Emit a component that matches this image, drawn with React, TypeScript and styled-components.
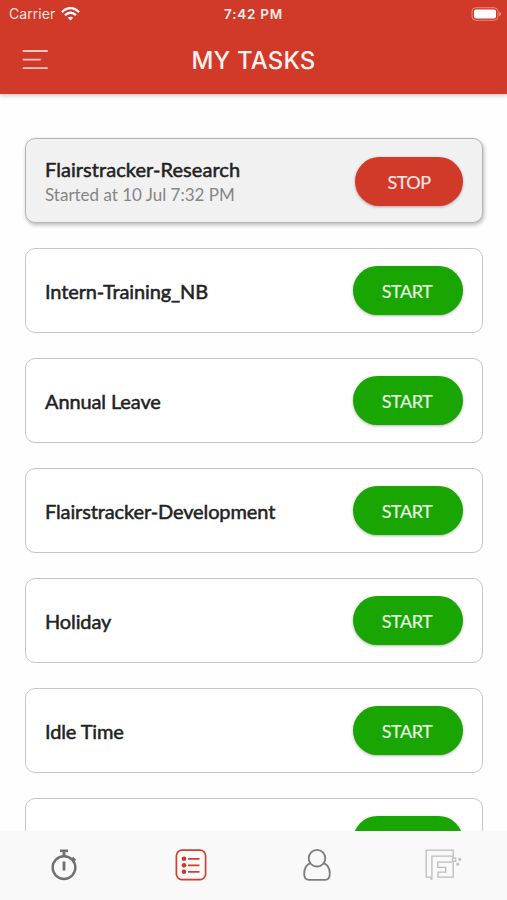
import React from "react";
import styled, { createGlobalStyle } from "styled-components";

const GlobalStyle = createGlobalStyle`
  * { box-sizing: border-box; }
  body { margin: 0; background: #fff; }
`;

const Screen = styled.div`
  display: flex;
  flex-direction: column;
  width: 507px;
  height: 900px;
  overflow: hidden;
  background: #fefefe;
  font-family: Lato, sans-serif;
`;

const Header = styled.header`
  flex: none;
  height: 94px;
  background: #d13929;
  color: #fff;
  box-shadow: 0 1px 5px rgba(0, 0, 0, 0.28);
  font-family: Inter, sans-serif;
  z-index: 1;
`;

const StatusBar = styled.div`
  display: grid;
  grid-template-columns: 1fr auto 1fr;
  align-items: center;
  height: 27px;
  padding: 0 7px 0 9px;
`;

const Carrier = styled.div`
  display: flex;
  align-items: center;
  gap: 6px;
  font-size: 14px;
  letter-spacing: 0.05px;
  color: #fbe3df;
`;

const Clock = styled.div`
  margin: 0 2px 0 0;
  font-size: 13.5px;
  font-weight: 600;
  letter-spacing: 0.75px;
  color: #fdeeeb;
`;

const Battery = styled.div`
  display: flex;
  justify-content: flex-end;
  margin-right: -2px;
`;

const TitleBar = styled.div`
  display: grid;
  grid-template-columns: 60px 1fr 60px;
  align-items: center;
  height: 66px;
`;

const MenuButton = styled.button`
  display: flex;
  padding: 0 0 0 22px;
  border: 0;
  background: none;
`;

const Title = styled.h1`
  margin: 0;
  padding-top: 1px;
  text-align: center;
  font-size: 24px;
  line-height: 30px;
  font-weight: 500;
  letter-spacing: 0.15px;
  color: #fff1ee;
`;

const TaskList = styled.main`
  flex: 1;
  min-height: 0;
  overflow: hidden;
  display: flex;
  flex-direction: column;
  gap: 25px;
  padding: 44px 24px 0 25px;
`;

const Card = styled.section<{ $active?: boolean }>`
  flex: none;
  display: flex;
  align-items: center;
  justify-content: space-between;
  height: 85px;
  padding: 0 19px;
  border: 1px solid ${(p) => (p.$active ? "#b4b4b4" : "#c6c6c6")};
  border-radius: 10px;
  background: ${(p) => (p.$active ? "#f1f1f1" : "#fff")};
  box-shadow: ${(p) => (p.$active ? "1px 2px 4px rgba(0, 0, 0, 0.28)" : "none")};
`;

const TaskText = styled.div<{ $active?: boolean }>`
  padding-top: ${(p) => (p.$active ? 3 : 0)}px;
`;

const TaskName = styled.div<{ $active?: boolean }>`
  font-size: 20px;
  line-height: 26px;
  letter-spacing: ${(p) => (p.$active ? "0.06px" : "-0.12px")};
  color: #222;
  -webkit-text-stroke: 0.5px #222;
`;

const TaskNote = styled.div`
  font-size: 17px;
  line-height: 26px;
  color: #858585;
`;

const ActionButton = styled.button<{ $stop?: boolean }>`
  width: ${(p) => (p.$stop ? 108 : 110)}px;
  height: 49px;
  margin-top: ${(p) => (p.$stop ? 2 : 0)}px;
  padding: ${(p) => (p.$stop ? "0" : "0 2px 0 0")};
  border: 0;
  border-radius: 25px;
  background: ${(p) => (p.$stop ? "#d13929" : "#19a502")};
  box-shadow: 0 1px 3px rgba(0, 0, 0, 0.3);
  color: ${(p) => (p.$stop ? "#fde5e1" : "#e8f8e5")};
  font: 400 18px Lato, sans-serif;
  letter-spacing: -0.5px;
  -webkit-text-stroke: 0.2px currentColor;
`;

const TabBar = styled.nav`
  flex: none;
  display: grid;
  grid-template-columns: repeat(4, 1fr);
  height: 69px;
  padding: 0 0 2px 1px;
  background: #f9f9f9;
  z-index: 1;
`;

const Tab = styled.a`
  display: flex;
  align-items: center;
  justify-content: center;
`;

const WifiIcon = () => (
  <svg width="19" height="14" viewBox="0 0 19 14" fill="none" stroke="#fff" strokeWidth="2.3">
    <path d="M1 5.2C6-.2 13-.2 18 5.2" />
    <path d="M4 8.2c3.3-3.3 7.7-3.3 11 0" />
    <path d="M6.8 10.7c1.7-1.4 3.7-1.4 5.4 0L9.5 13.6z" fill="#fff" stroke="none" />
  </svg>
);

const BatteryIcon = () => (
  <svg width="31" height="14" viewBox="0 0 31 14">
    <rect x="1" y=".7" width="26" height="12.6" rx="3.8" fill="none" stroke="#e58a80" />
    <rect x="3" y="2.6" width="22" height="8.8" rx="2" fill="#fff" />
    <path d="M28.3 5v4c1-.3 1.6-1.1 1.6-2s-.6-1.7-1.6-2z" fill="#eba39b" />
  </svg>
);

const MenuIcon = () => (
  <svg width="26" height="22" viewBox="0 0 26 22" stroke="#f9c9c1" strokeWidth="1.8">
    <path d="M.7 2h25M.7 10.6h18M.7 19.2h25" />
  </svg>
);

const StopwatchIcon = () => (
  <svg width="28" height="32" viewBox="0 0 28 32" fill="none" stroke="#707070">
    <circle cx="14" cy="18.6" r="11.4" strokeWidth="2.4" />
    <path d="M10 1.8h8" strokeWidth="2.6" />
    <path d="M14 2v5" strokeWidth="2.8" />
    <path d="M14 12.5v9" strokeWidth="2.8" />
    <path d="M22.3 8.6l3 3" strokeWidth="2.6" />
  </svg>
);

const ListIcon = () => (
  <svg width="32" height="32" viewBox="0 0 32 32" fill="none" stroke="#d13f31">
    <rect x="1.4" y="1.2" width="29.2" height="29.4" rx="5.5" strokeWidth="1.7" />
    <path d="M13 9.8h11.5M13 16.3h11.5M13 22.8h11.5" strokeWidth="1.7" />
    <g fill="#c9372b" stroke="none">
      <circle cx="9" cy="9.8" r="2.3" />
      <circle cx="9" cy="16.3" r="2.3" />
      <circle cx="9" cy="22.8" r="2.3" />
    </g>
  </svg>
);

const PersonIcon = () => (
  <svg width="28" height="32" viewBox="0 0 28 32" fill="none" stroke="#7d7d7d" strokeWidth="1.8">
    <circle cx="14" cy="9.2" r="8.3" />
    <path d="M7.3 14.2C3.3 15.7 1.2 19.9 1.2 24.8c0 3.8 1.8 6.1 4.8 6.1h16c3 0 4.8-2.3 4.8-6.1 0-4.9-2.1-9.1-6.1-10.6" />
  </svg>
);

const BrandIcon = () => (
  <svg width="38" height="32" viewBox="0 0 38 32" fill="none" stroke="#bcbcbc" strokeWidth="1.3">
    <path d="M6.9 30.8V7.2h21.3V1.2H1.2v27h3.8l1.9 2.6M28.2 13v15.2H13v-5h7.7v-4.9h-7.9v-5.2h14.3M28.2 7.2v1.6" />
    <rect x="27.5" y="9" width="3.2" height="3.2" />
    <path d="M33.8 9.4h2v2h-2zM31.8 14.2h2v2h-2z" fill="#c4c4c4" strokeWidth=".8" />
  </svg>
);

interface Task {
  name: string;
  note?: string;
}

const tasks: Task[] = [
  { name: "Flairstracker-Research", note: "Started at 10 Jul 7:32 PM" },
  { name: "Intern-Training_NB" },
  { name: "Annual Leave" },
  { name: "Flairstracker-Development" },
  { name: "Holiday" },
  { name: "Idle Time" },
  { name: "" },
];

export default function App() {
  return (
    <Screen>
      <GlobalStyle />
      <Header>
        <StatusBar>
          <Carrier>
            Carrier
            <WifiIcon />
          </Carrier>
          <Clock>7:42 PM</Clock>
          <Battery>
            <BatteryIcon />
          </Battery>
        </StatusBar>
        <TitleBar>
          <MenuButton aria-label="Menu">
            <MenuIcon />
          </MenuButton>
          <Title>MY TASKS</Title>
        </TitleBar>
      </Header>
      <TaskList>
        {tasks.map((task, i) => (
          <Card key={i} $active={!!task.note}>
            <TaskText $active={!!task.note}>
              <TaskName $active={!!task.note}>{task.name}</TaskName>
              {task.note && <TaskNote>{task.note}</TaskNote>}
            </TaskText>
            {/* The last row is cut off by the tab bar above its label. */}
            <ActionButton $stop={!!task.note}>{task.name && (task.note ? "STOP" : "START")}</ActionButton>
          </Card>
        ))}
      </TaskList>
      <TabBar>
        <Tab aria-label="Timer"><StopwatchIcon /></Tab>
        <Tab aria-label="Tasks"><ListIcon /></Tab>
        <Tab aria-label="Profile"><PersonIcon /></Tab>
        <Tab aria-label="Flairstracker"><BrandIcon /></Tab>
      </TabBar>
    </Screen>
  );
}
